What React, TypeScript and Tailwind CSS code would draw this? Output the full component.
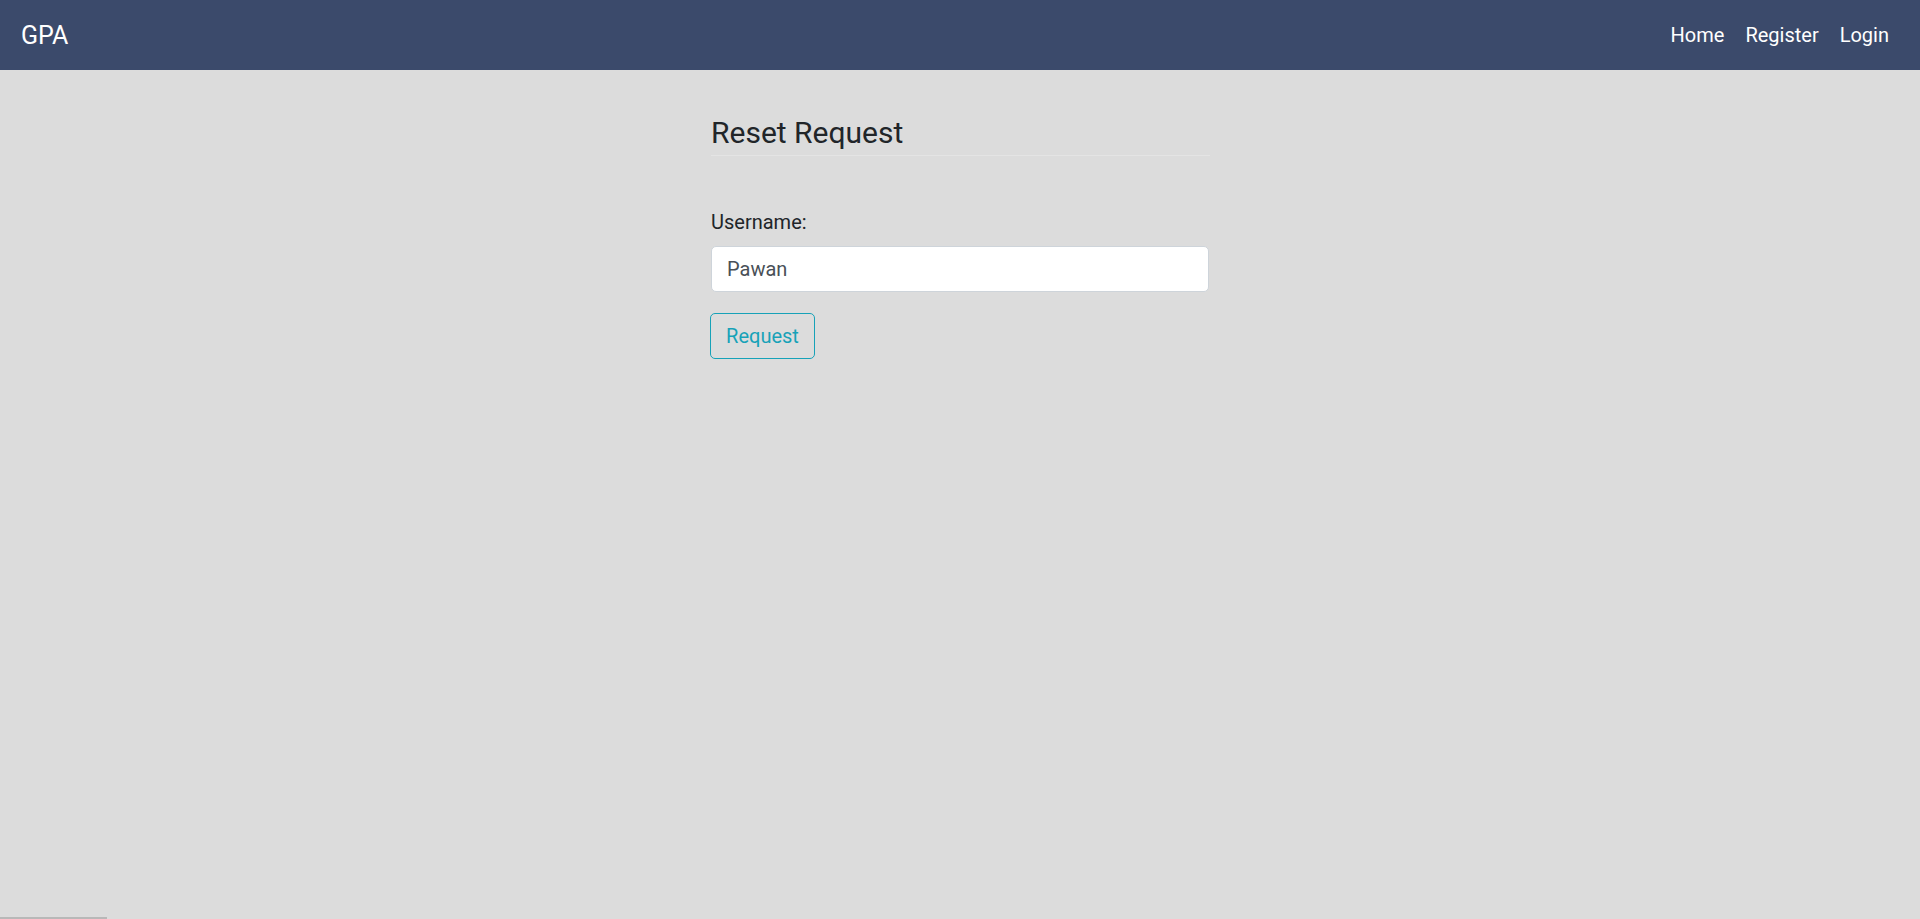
import { useState } from 'react';

const font = { fontFamily: 'Roboto, "Liberation Sans", sans-serif' };

export default function App() {
    const [username, setUsername] = useState('Pawan');

    return (
        <div className="min-h-[919px] bg-[#dcdcdc] relative" style={font}>
            {/* Navbar */}
            <nav className="h-[70px] bg-[#3b4a6b] flex items-center justify-between pl-[21px] pr-[31px]">
                <a className="text-[25px] leading-none text-white">GPA</a>
                <div className="flex items-center gap-[21px] text-[20px] leading-none text-white">
                    <a>Home</a>
                    <a>Register</a>
                    <a>Login</a>
                </div>
            </nav>

            {/* Reset form */}
            <div className="mx-auto w-[500px] pt-[45px] pl-[1px]">
                <h4 className="text-[30px] leading-[1.2] font-normal text-[#212529] pb-[4px] border-b border-[#e4e4e4]">
                    Reset Request
                </h4>
                <form className="mt-[51px]" onSubmit={(e) => e.preventDefault()}>
                    <label className="block text-[20px] leading-[1.5] text-[#212529] mb-[9px]">Username:</label>
                    <input
                        type="text"
                        value={username}
                        onChange={(e) => setUsername(e.target.value)}
                        className="block w-[498px] h-[46px] px-[15px] text-[20px] text-[#495057] bg-white border border-[#ced4da] rounded-[5px] focus:outline-none"
                        style={font}
                    />
                    <button
                        type="submit"
                        className="mt-[21px] -ml-[1px] w-[105px] h-[46px] border border-[#17a2b8] rounded-[5px] text-[20px] text-[#17a2b8] bg-transparent"
                    >
                        Request
                    </button>
                </form>
            </div>

            <div className="fixed bottom-0 left-0 w-[107px] h-[2px] bg-[#b8b8b8]" />
        </div>
    );
}
